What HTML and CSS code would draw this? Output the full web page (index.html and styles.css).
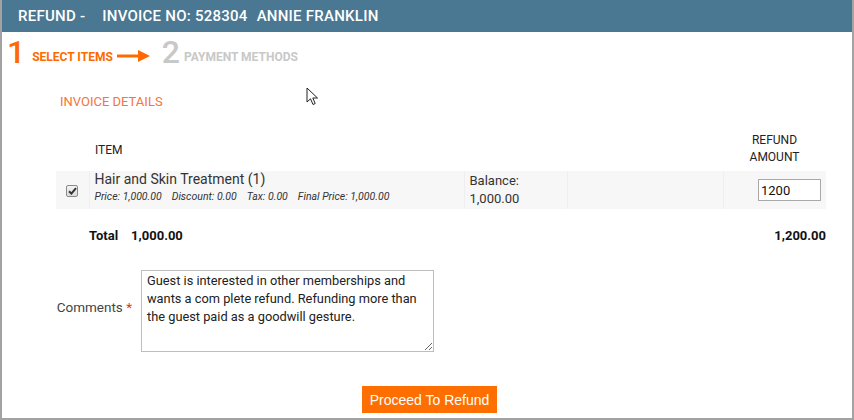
FILE: index.html
```html
<!DOCTYPE html>
<html>
<head>
<meta charset="utf-8">
<link rel="stylesheet" href="styles.css">
</head>
<body>
<div class="frame">
  <div class="titlebar">
    <span>REFUND -</span><span class="inv">INVOICE NO: 528304</span><span class="name">ANNIE FRANKLIN</span>
  </div>
  <div class="steps">
    <span class="num active">1</span><span class="label active">SELECT ITEMS</span>
    <svg class="arrow" width="33" height="12" viewBox="0 0 33 12"><path d="M0 6H23" stroke="#ff6a00" stroke-width="3"/><path d="M21 0L33 6L21 12Z" fill="#ff6a00"/></svg>
    <span class="num">2</span><span class="label second">PAYMENT METHODS</span>
  </div>
  <div class="content">
    <h2 class="section">INVOICE DETAILS</h2>
    <table class="items">
      <colgroup><col class="c-check"><col class="c-item"><col class="c-bal"><col class="c-blank"><col class="c-amt"></colgroup>
      <thead>
        <tr><th></th><th class="th-item">ITEM</th><th></th><th></th><th class="th-amt">REFUND<br>AMOUNT</th></tr>
      </thead>
      <tbody>
        <tr class="row">
          <td class="chk"><span class="checkbox"><svg width="9" height="8" viewBox="0 0 9 8"><path d="M1 4.2L3.4 6.6L8 1.2" stroke="#333" stroke-width="2" fill="none"/></svg></span></td>
          <td class="item"><div class="item-name">Hair and Skin Treatment (1)</div><div class="item-meta"><span>Price: 1,000.00</span><span>Discount: 0.00</span><span>Tax: 0.00</span><span>Final Price: 1,000.00</span></div></td>
          <td class="bal">Balance:<br>1,000.00</td>
          <td></td>
          <td class="amt"><input class="amt-input" type="text" value="1200"></td>
        </tr>
        <tr class="total">
          <td></td>
          <td class="tot-left"><span class="tot-label">Total</span>1,000.00</td>
          <td></td><td></td>
          <td class="tot-right">1,200.00</td>
        </tr>
      </tbody>
    </table>
    <div class="comments">
      <label class="c-label">Comments <span class="req">*</span></label>
      <textarea class="c-text">Guest is interested in other memberships and wants a com plete refund. Refunding more than the guest paid as a goodwill gesture.</textarea>
    </div>
    <div class="actions"><button class="proceed">Proceed To Refund</button></div>
  </div>
  <svg class="cursor" width="14" height="20" viewBox="0 0 14 20"><path d="M1 1V15L4.5 11.8L7 17.5L9.2 16.5L6.8 11H11.5Z" fill="#fff" stroke="#222" stroke-width="1"/></svg>
</div>
</body>
</html>
```
FILE: styles.css
```css
html, body { margin: 0; padding: 0; background: #fff; }
body { font-family: Roboto, "Liberation Sans", sans-serif; color: #222; }
.frame {
  position: relative;
  width: 854px; height: 420px; box-sizing: border-box;
  border: 2px solid #a3a3a3; border-top: 0;
  background: #fff;
}
.titlebar {
  height: 32px; background: #4a7792; color: #fff;
  font-size: 15px; font-weight: 500; letter-spacing: 0.25px;
  display: flex; align-items: center; padding-left: 16px;
}
.titlebar .inv { margin-left: 17px; }
.titlebar .name { margin-left: 9px; }
.steps {
  display: flex; align-items: flex-end; height: 36px; padding-left: 5px;
}
.steps .num { font-size: 32px; line-height: 32px; color: #c8c8c8; font-weight: 500; }
.steps .num.active { color: #ff6a00; }
.steps .label { font-size: 12px; font-weight: 700; color: #c8c8c8; margin-left: 7px; margin-bottom: 4px; letter-spacing: 0; }
.steps .label.second { margin-left: 4px; }
.steps .label.active { color: #ff6a00; }
.steps .arrow { margin: 0 12px 6px 4px; }
.content { padding: 0 26px 0 54px; }
.section { margin: 26px 0 0 4px; font-size: 13px; font-weight: 400; color: #f4743b; line-height: 16px; }
.items { width: 770px; border-collapse: collapse; table-layout: fixed; margin-top: 19px; font-size: 13px; }
.c-check { width: 33px; } .c-item { width: 375px; } .c-bal { width: 103px; } .c-blank { width: 156px; } .c-amt { width: 103px; }
thead th { font-weight: 400; font-size: 12px; color: #222; height: 40px; vertical-align: middle; padding: 0; }
.th-item { text-align: left; padding-left: 6px; }
.th-amt { text-align: center; line-height: 17px; padding-left: 0; padding-bottom: 2px; }
.row td { background: #f7f7f7; height: 38px; padding: 0; vertical-align: middle; border-left: 1px solid #efefef; }
.row td:first-child { border-left: 0; }
.chk { text-align: center; padding-left: 0; }
.checkbox {
  display: inline-flex; align-items: center; justify-content: center;
  width: 10px; height: 10px; border: 1px solid #8a8a8a; border-radius: 2px;
  background: linear-gradient(#f4f4f4, #dcdcdc); vertical-align: middle; margin-left: 0;
}
.row td.item { padding-left: 5px; vertical-align: top; }
.item-name { font-size: 14px; color: #333; line-height: 16px; }
.item-meta { font-size: 10.5px; font-style: italic; color: #333; line-height: 14px; margin-top: 3px; display: flex; gap: 10px; }
.row td.bal { padding-left: 5px; line-height: 18px; color: #333; }
.row td.amt { text-align: right; padding-right: 5px; }
.amt-input {
  width: 63px; height: 22px; box-sizing: border-box; border: 1px solid #a9a9a9;
  font-family: Roboto, "Liberation Sans", sans-serif; font-size: 13px; padding: 0 2px; color: #111; margin: 0;
}
.total td { height: 52px; font-weight: 700; font-size: 13px; padding: 0; vertical-align: middle; color: #111; }
.total td.tot-left { padding-left: 1px; }
.tot-label { margin-right: 13px; margin-left: -1px; }
.tot-right { text-align: right; }
.comments { display: flex; align-items: flex-start; margin-top: 9px; }
.c-label { width: 76px; text-align: right; font-size: 13.5px; line-height: 16px; color: #444; margin-right: 9px; margin-left: -54px; padding-left: 54px; margin-top: 29px; white-space: nowrap; }
.req { color: #e03030; }
.c-text {
  width: 293px; height: 82px; box-sizing: border-box; border: 1px solid #bdbdbd;
  font-family: Roboto, "Liberation Sans", sans-serif; font-size: 12.8px; line-height: 18px; color: #222;
  padding: 1px 5px; resize: both; margin: 0;
}
.actions { display: flex; justify-content: center; margin-top: 34px; padding-right: 23px; }
.proceed {
  background: #ff6e00; color: #fff; border: 0; font-family: "Liberation Sans", Arial, sans-serif;
  font-size: 14px; height: 27px; padding: 0 7px; width: 135px;
}
.cursor { position: absolute; left: 304px; top: 87px; }
```
